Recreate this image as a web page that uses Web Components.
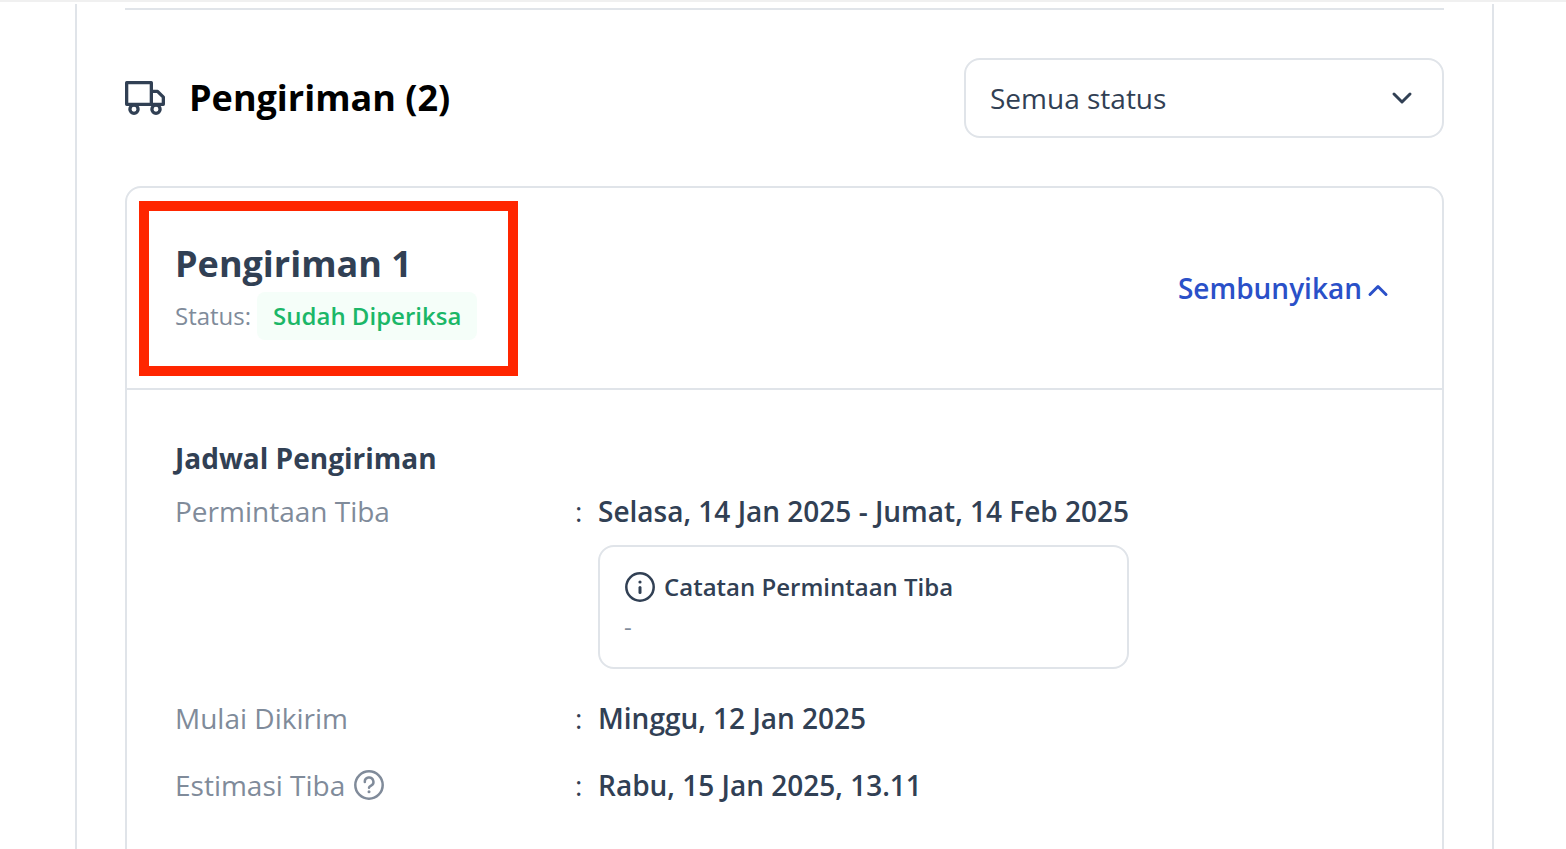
<!DOCTYPE html>
<html lang="id">
<head>
<meta charset="UTF-8">
<meta name="viewport" content="width=device-width, initial-scale=1.0">
<title>Pengiriman</title>
<style>
  :root {
    --dark: #314054;
    --muted: #808b9a;
    --line: #e0e4e9;
    --blue: #2a50c8;
    --green: #1bb768;
  }
  body {
    margin: 0;
    height: 100vh;
    overflow: hidden;
    background: white;
    border-top: 2px solid #f0f0f0;
    box-sizing: border-box;
    color: var(--dark);
    font: 28px/40px "Open Sans", sans-serif;
  }
</style>
</head>
<body>
  <order-panel>
    <section-header slot="header" heading="Pengiriman (2)">
      <status-select></status-select>
    </section-header>
    <shipment-card>
      <shipment-summary slot="summary" heading="Pengiriman 1" status="Sudah Diperiksa"></shipment-summary>
      <detail-row label="Permintaan Tiba">
        Selasa, 14 Jan 2025 - Jumat, 14 Feb 2025
        <note-box slot="note" heading="Catatan Permintaan Tiba">-</note-box>
      </detail-row>
      <detail-row label="Mulai Dikirim">Minggu, 12 Jan 2025</detail-row>
      <detail-row label="Estimasi Tiba">
        <help-button slot="help"></help-button>
        Rabu, 15 Jan 2025, 13.11
      </detail-row>
    </shipment-card>
  </order-panel>

<script>
class OrderPanel extends HTMLElement {
  constructor() {
    super();
    this.attachShadow({ mode: 'open' });
    this.shadowRoot.innerHTML = `
      <style>
        :host {
          display: block;
          margin: 2px 72px 0 75px;
          padding: 4px 48px 48px;
          border: solid var(--line);
          border-width: 0 2px;
        }
        hr {
          margin: 0 0 48px;
          border: 0;
          border-top: 2px solid var(--line);
        }
      </style>
      <hr>
      <slot name="header"></slot>
      <slot></slot>
    `;
  }
}

class SectionHeader extends HTMLElement {
  constructor() {
    super();
    this.attachShadow({ mode: 'open' });
    this.shadowRoot.innerHTML = `
      <style>
        :host {
          display: flex;
          align-items: center;
          gap: 24px;
          margin-bottom: 48px;
        }
        svg {
          flex: none;
        }
        h2 {
          flex: 1;
          margin: 0;
          color: black;
          font-size: 36px;
          line-height: 56px;
        }
      </style>
      <svg width="40" height="34" viewBox="0 0 40 34" fill="none" stroke="currentColor" stroke-width="3.3" stroke-linejoin="round" aria-hidden="true">
        <path d="M1.650 23.350V1.650h24.700v21.700zM26.350 10.400h6.200l5.800 5.800v7.150h-12"/>
        <circle cx="9" cy="28.200" r="4.100" fill="white"/>
        <circle cx="31" cy="28.200" r="4.100" fill="white"/>
      </svg>
      <h2></h2>
      <slot></slot>
    `;
  }

  connectedCallback() {
    this.shadowRoot.querySelector('h2').textContent = this.getAttribute('heading');
  }
}

class StatusSelect extends HTMLElement {
  constructor() {
    super();
    this.attachShadow({ mode: 'open' });
    this.shadowRoot.innerHTML = `
      <style>
        :host {
          display: grid;
          align-items: center;
          width: 480px;
        }
        select, svg {
          grid-area: 1 / 1;
        }
        select {
          appearance: none;
          box-sizing: border-box;
          width: 100%;
          height: 80px;
          padding: 0 64px 0 24px;
          border: 2px solid var(--line);
          border-radius: 16px;
          background: white;
          color: inherit;
          font: inherit;
        }
        svg {
          justify-self: end;
          margin-right: 26px;
          pointer-events: none;
        }
      </style>
      <select aria-label="Status pengiriman">
        <option>Semua status</option>
        <option>Sudah Diperiksa</option>
      </select>
      <svg width="32" height="32" viewBox="0 0 32 32" fill="none" stroke="currentColor" stroke-width="3" stroke-linecap="round" stroke-linejoin="round" aria-hidden="true">
        <path d="M8 12l8 8 8-8"/>
      </svg>
    `;
  }
}

class ShipmentCard extends HTMLElement {
  constructor() {
    super();
    this.attachShadow({ mode: 'open' });
    this.shadowRoot.innerHTML = `
      <style>
        :host {
          display: block;
          border: 2px solid var(--line);
          border-radius: 16px;
        }
        header {
          display: flex;
          align-items: center;
          justify-content: space-between;
          padding: 48px;
        }
        button {
          display: flex;
          align-items: center;
          padding: 0;
          border: 0;
          background: none;
          color: var(--blue);
          font: inherit;
          font-weight: 600;
          cursor: pointer;
        }
        button[aria-expanded="false"] svg {
          transform: rotate(180deg);
        }
        .body {
          padding: 48px 48px 72px;
          border-top: 2px solid var(--line);
        }
        h4 {
          margin: 0 0 13px;
          font-size: 28px;
        }
        .rows {
          display: grid;
          gap: 27px;
        }
      </style>
      <header>
        <slot name="summary"></slot>
        <button type="button" aria-expanded="true">
          <span>Sembunyikan</span>
          <svg width="32" height="32" viewBox="0 0 32 32" fill="none" stroke="currentColor" stroke-width="3" stroke-linecap="round" stroke-linejoin="round" aria-hidden="true">
            <path d="M8 22.500l8-8 8 8"/>
          </svg>
        </button>
      </header>
      <div class="body">
        <h4>Jadwal Pengiriman</h4>
        <div class="rows"><slot></slot></div>
      </div>
    `;
    this._button = this.shadowRoot.querySelector('button');
    this._button.addEventListener('click', () => this._toggle());
  }

  _toggle() {
    const body = this.shadowRoot.querySelector('.body');
    body.hidden = !body.hidden;
    this._button.setAttribute('aria-expanded', !body.hidden);
    this._button.querySelector('span').textContent = body.hidden ? 'Tampilkan' : 'Sembunyikan';
  }
}

class ShipmentSummary extends HTMLElement {
  constructor() {
    super();
    this.attachShadow({ mode: 'open' });
    this.shadowRoot.innerHTML = `
      <style>
        :host {
          display: block;
          position: relative;
        }
        /* highlight frame drawn over the card */
        :host::after {
          content: "";
          position: absolute;
          inset: -35px -41px -36px -36px;
          border: 10px solid #ff2600;
          pointer-events: none;
        }
        h3 {
          margin: 0;
          font-size: 36px;
          line-height: 56px;
        }
        p {
          display: flex;
          gap: 6px;
          margin: 0;
          color: var(--muted);
          font-size: 24px;
          line-height: 48px;
        }
        .badge {
          padding: 0 16px;
          border-radius: 8px;
          background: #f5fef9;
          color: var(--green);
          font-weight: 600;
        }
      </style>
      <h3></h3>
      <p>Status: <span class="badge"></span></p>
    `;
  }

  connectedCallback() {
    this.shadowRoot.querySelector('h3').textContent = this.getAttribute('heading');
    this.shadowRoot.querySelector('.badge').textContent = this.getAttribute('status');
  }
}

class DetailRow extends HTMLElement {
  constructor() {
    super();
    this.attachShadow({ mode: 'open' });
    this.shadowRoot.innerHTML = `
      <style>
        :host {
          display: grid;
          grid-template-columns: 400px 23px 1fr;
        }
        .label {
          display: flex;
          align-items: center;
          align-self: start;
          gap: 8px;
          color: var(--muted);
        }
        .value {
          justify-self: start;
          font-weight: 600;
        }
      </style>
      <div class="label"><span></span><slot name="help"></slot></div>
      <div>:</div>
      <div class="value"><slot></slot><slot name="note"></slot></div>
    `;
  }

  connectedCallback() {
    this.shadowRoot.querySelector('.label span').textContent = this.getAttribute('label');
  }
}

class NoteBox extends HTMLElement {
  constructor() {
    super();
    this.attachShadow({ mode: 'open' });
    this.shadowRoot.innerHTML = `
      <style>
        :host {
          display: block;
          margin: 14px 0 2px;
          padding: 20px 24px;
          border: 2px solid var(--line);
          border-radius: 16px;
          font-size: 24px;
          line-height: 40px;
        }
        .title {
          display: flex;
          align-items: center;
          gap: 8px;
        }
        .text {
          color: var(--muted);
          font-weight: 400;
        }
      </style>
      <div class="title">
        <svg width="32" height="32" viewBox="0 0 32 32" fill="none" stroke="currentColor" stroke-width="2.5" stroke-linecap="round" aria-hidden="true">
          <circle cx="16" cy="16" r="13.7"/>
          <path d="M16 16.500v5" stroke-width="3"/>
          <circle cx="16" cy="11" r="1.600" fill="currentColor" stroke="none"/>
        </svg>
        <span></span>
      </div>
      <div class="text"><slot></slot></div>
    `;
  }

  connectedCallback() {
    this.shadowRoot.querySelector('.title span').textContent = this.getAttribute('heading');
  }
}

class HelpButton extends HTMLElement {
  constructor() {
    super();
    this.attachShadow({ mode: 'open' });
    this.shadowRoot.innerHTML = `
      <style>
        :host {
          display: flex;
        }
        button {
          display: flex;
          padding: 0;
          border: 0;
          background: none;
          color: inherit;
          cursor: pointer;
        }
      </style>
      <button type="button" aria-label="Info estimasi tiba">
        <svg width="32" height="32" viewBox="0 0 32 32" fill="none" stroke="currentColor" stroke-width="2.5" stroke-linecap="round" stroke-linejoin="round" aria-hidden="true">
          <circle cx="16" cy="16" r="13.7"/>
          <path d="M11.800 13a4.300 4.300 0 1 1 6.300 3.600c-1.400.7-2.100 1.100-2.100 2.200"/>
          <circle cx="16" cy="22.800" r="1.500" fill="currentColor" stroke="none"/>
        </svg>
      </button>
    `;
  }
}

customElements.define('order-panel', OrderPanel);
customElements.define('section-header', SectionHeader);
customElements.define('status-select', StatusSelect);
customElements.define('shipment-card', ShipmentCard);
customElements.define('shipment-summary', ShipmentSummary);
customElements.define('detail-row', DetailRow);
customElements.define('note-box', NoteBox);
customElements.define('help-button', HelpButton);
</script>
</body>
</html>
